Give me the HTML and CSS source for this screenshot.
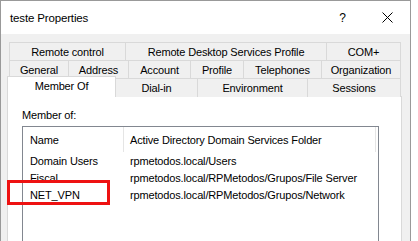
FILE: index.html
```html
<!DOCTYPE html>
<html>
  <head>
    <meta charset="UTF-8">
    <link rel="stylesheet" href="styles.css">
    <title>teste Properties</title>
  </head>
  <body>
    <div class="window">
      <div class="titlebar">
        <span class="title">teste Properties</span>
        <div class="caption">
          <span class="cap-btn">?</span>
          <span class="cap-btn">
            <svg width="11" height="11" viewBox="0 0 11 11">
              <path d="M0.5 0.5 L10.5 10.5 M10.5 0.5 L0.5 10.5" stroke="#000" stroke-width="1" fill="none"/>
            </svg>
          </span>
        </div>
      </div>
      <div class="body">
        <div class="tab-row row-1">
          <div class="tab">Remote control</div>
          <div class="tab">Remote Desktop Services Profile</div>
          <div class="tab">COM+</div>
        </div>
        <div class="tab-row row-2">
          <div class="tab">General</div>
          <div class="tab">Address</div>
          <div class="tab">Account</div>
          <div class="tab">Profile</div>
          <div class="tab">Telephones</div>
          <div class="tab">Organization</div>
        </div>
        <div class="tab-row row-3">
          <div class="tab active">Member Of</div>
          <div class="tab after-active">Dial-in</div>
          <div class="tab">Environment</div>
          <div class="tab">Sessions</div>
        </div>
        <div class="panel">
          <div class="label">Member of:</div>
          <div class="listbox">
            <div class="lv-head">
              <div class="col-name">Name</div>
              <div class="col-folder">Active Directory Domain Services Folder</div>
            </div>
            <div class="lv-row">
              <div class="col-name">Domain Users</div>
              <div class="col-folder">rpmetodos.local/Users</div>
            </div>
            <div class="lv-row">
              <div class="col-name">Fiscal</div>
              <div class="col-folder">rpmetodos.local/RPMetodos/Grupos/File Server</div>
            </div>
            <div class="lv-row">
              <div class="col-name">NET_VPN</div>
              <div class="col-folder">rpmetodos.local/RPMetodos/Grupos/Network</div>
            </div>
          </div>
        </div>
      </div>
      <div class="highlight"></div>
    </div>
  </body>
</html>
```

FILE: styles.css
```css
* {
  box-sizing: border-box;
}

body {
  margin: 0;
  background-color: #FFFFFF;
  font-family: 'Liberation Sans', Arial, sans-serif;
  font-size: 11px;
  letter-spacing: -0.15px;
  color: #000000;
  overflow: hidden;
}

.window {
  position: relative;
  width: 411px;
  height: 260px;
  border: 1px solid #999999;
  border-bottom: none;
  background-color: #F0F0F0;
}

.titlebar {
  display: flex;
  align-items: center;
  justify-content: space-between;
  height: 33px;
  background-color: #FFFFFF;
}

.title {
  padding-left: 9px;
  font-size: 11.5px;
}

.caption {
  display: flex;
  height: 100%;
}

.cap-btn {
  display: flex;
  align-items: center;
  justify-content: center;
  width: 45px;
  height: 100%;
  font-size: 12px;
}

.body {
  padding: 8px 8px 0 6px;
}

.tab-row {
  display: grid;
  height: 18px;
}

.row-1 {
  margin: 0 1px 0 2px;
  grid-template-columns: 116px 201px 75px;
}

.row-2 {
  margin: 0 1px 0 2px;
  grid-template-columns: 59px 60px 62px 53px 78px 80px;
}

.row-3 {
  margin-right: 1px;
  grid-template-columns: 109px 81px 110px 94px;
}

.tab {
  display: flex;
  align-items: center;
  justify-content: center;
  border-top: 1px solid #D9D9D9;
  border-left: 1px solid #D9D9D9;
  background-color: #F0F0F0;
  white-space: nowrap;
}

.tab:last-child {
  border-right: 1px solid #D9D9D9;
}

.tab.active {
  position: relative;
  z-index: 1;
  height: 21px;
  margin-top: -2px;
  border-right: 1px solid #D9D9D9;
  background-color: #FFFFFF;
  padding-bottom: 3px;
}

.tab.after-active {
  border-left: none;
}

.panel {
  width: 395px;
  height: 200px;
  border: 1px solid #D9D9D9;
  background-color: #FFFFFF;
  padding: 11px 0 0 14px;
}

.label {
  line-height: 15px;
}

.listbox {
  width: 357px;
  height: 160px;
  margin-top: 3px;
  border: 1px solid #828790;
  background-color: #FFFFFF;
}

.lv-head,
.lv-row {
  display: flex;
  align-items: center;
}

.lv-head {
  height: 25px;
}

.lv-row {
  height: 17px;
}

.col-name {
  flex-shrink: 0;
  width: 100px;
  padding-left: 7px;
  white-space: nowrap;
}

.col-folder {
  padding-left: 7px;
  white-space: nowrap;
}

.lv-head .col-name,
.lv-head .col-folder {
  display: flex;
  align-items: center;
  height: 100%;
}

.lv-head .col-folder {
  width: 253px;
  padding-left: 6px;
  border-left: 1px solid #E5E5E5;
  border-right: 1px solid #E5E5E5;
}

.highlight {
  position: absolute;
  left: 6px;
  top: 179px;
  width: 103px;
  height: 25px;
  border: 3px solid #EE1111;
}
```
